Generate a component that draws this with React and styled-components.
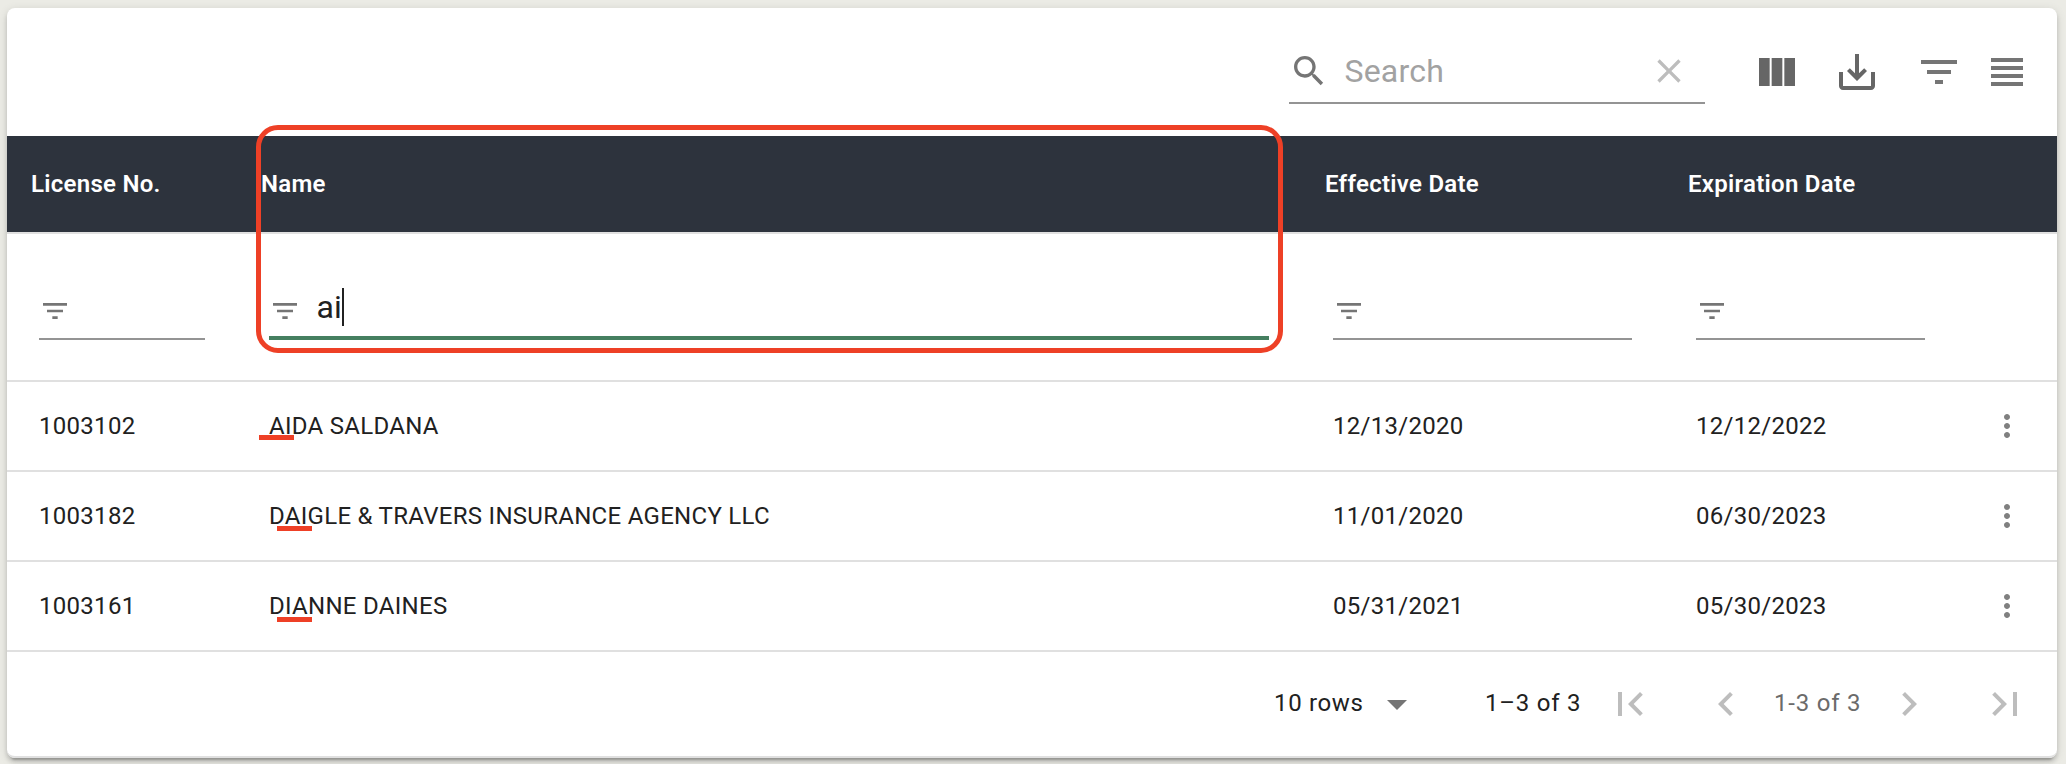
import React from 'react';
import styled, { createGlobalStyle, css } from 'styled-components';

const GlobalStyle = createGlobalStyle`
  *, *::before, *::after { box-sizing: border-box; }
  body {
    margin: 0;
    background: #ebebe5;
    color: #212121;
    font-family: Roboto, "Liberation Sans", sans-serif;
    -webkit-font-smoothing: antialiased;
  }
`;

const Page = styled.main`
  height: 764px;
  padding: 8px 9px 6px 7px;
  overflow: hidden;
`;

const Card = styled.section`
  position: relative;
  display: flex;
  flex-direction: column;
  height: 750px;
  background: #fff;
  border-radius: 8px;
  box-shadow:
    0 6px 2px -4px rgba(0, 0, 0, 0.2),
    0 4px 4px 0 rgba(0, 0, 0, 0.14),
    0 2px 10px 0 rgba(0, 0, 0, 0.12);
`;

const Svg = styled.svg`
  display: block;
  flex: none;
  width: ${(p) => p.$size}px;
  height: ${(p) => p.$size}px;
  fill: ${(p) => p.$color};
`;

const ICONS = {
  search:
    'M15.5 14h-.79l-.28-.27C15.41 12.59 16 11.11 16 9.5 16 5.91 13.09 3 9.5 3S3 5.91 3 9.5 5.91 16 9.5 16c1.61 0 3.09-.59 4.23-1.57l.27.28v.79l5 4.99L20.49 19l-4.99-5zm-6 0C7.01 14 5 11.99 5 9.5S7.01 5 9.5 5 14 7.01 14 9.5 11.99 14 9.5 14z',
  clear:
    'M19 6.41L17.59 5 12 10.59 6.41 5 5 6.41 10.59 12 5 17.59 6.41 19 12 13.41 17.59 19 19 17.59 13.41 12z',
  columns: 'M14.67 5v14H9.33V5h5.34zm1 14H21V5h-5.33v14zm-7.34 0V5H3v14h5.33z',
  download:
    'M19 12v7H5v-7H3v7c0 1.1.9 2 2 2h14c1.1 0 2-.9 2-2v-7h-2zm-6 .67l2.59-2.58L17 11.5l-5 5-5-5 1.41-1.41L11 12.67V3h2z',
  filter: 'M10 18h4v-2h-4v2zM3 6v2h18V6H3zm3 7h12v-2H6v2z',
  density: 'M4 15h16v-2H4v2zm0 4h16v-2H4v2zm0-8h16V9H4v2zm0-6v2h16V5H4z',
  more: 'M12 8c1.1 0 2-.9 2-2s-.9-2-2-2-2 .9-2 2 .9 2 2 2zm0 2c-1.1 0-2 .9-2 2s.9 2 2 2 2-.9 2-2-.9-2-2-2zm0 6c-1.1 0-2 .9-2 2s.9 2 2 2 2-.9 2-2-.9-2-2-2z',
  dropdown: 'M7 10l5 5 5-5z',
  first: 'M18.41 16.59L13.82 12l4.59-4.59L17 6l-6 6 6 6zM6 6h2v12H6z',
  prev: 'M15.41 7.41L14 6l-6 6 6 6 1.41-1.41L10.83 12z',
  next: 'M10 6L8.59 7.41 13.17 12l-4.58 4.59L10 18l6-6z',
  last: 'M5.59 7.41L10.18 12l-4.59 4.59L7 18l6-6-6-6zM16 6h2v12h-2z',
};

const Icon = ({ name, size = 48, color = '#757575' }) => (
  <Svg viewBox="0 0 24 24" $size={size} $color={color} aria-hidden="true">
    <path d={ICONS[name]} />
  </Svg>
);

const Toolbar = styled.header`
  display: flex;
  justify-content: flex-end;
  align-items: flex-start;
  height: 128px;
  padding: 32px 26px 0 0;
`;

const SearchField = styled.label`
  display: flex;
  align-items: center;
  width: 416px;
  height: 64px;
  padding-right: 16px;
  border-bottom: 2px solid #949494;
`;

const SearchText = styled.span`
  flex: 1;
  padding-left: 15.5px;
  font-size: 32px;
  line-height: 38px;
  letter-spacing: 0.2px;
  color: #a2a2a2;
`;

const IconButton = styled.button`
  display: block;
  flex: none;
  margin: 0 0 0 ${(p) => p.$gap || 0}px;
  padding: 0;
  border: 0;
  background: none;
`;

const ToolbarButton = styled(IconButton)`
  margin-top: 8px;
`;

const rowGrid = css`
  display: grid;
  grid-template-columns: 230px 1064px 363px 293px 100px;
  border-bottom: 2px solid #e0e0e0;
`;

const HeadRow = styled.div`
  ${rowGrid}
  align-items: center;
  height: 98px;
  background: #2d333d;
  background-clip: padding-box;
  color: #fff;
`;

const HeadCell = styled.div`
  padding-left: 24px;
  font-size: 24px;
  font-weight: 600;
  line-height: 36px;
  letter-spacing: 0.28px;
`;

const FilterRow = styled.div`
  ${rowGrid}
  height: 148px;
  padding-top: 42px;
`;

const FilterCell = styled.div`
  padding: 0 32px;
`;

const FilterField = styled.div`
  display: flex;
  align-items: flex-start;
  height: 64px;
  padding-top: 12px;
  border-bottom: ${(p) => (p.$focused ? '4px solid #457f60' : '2px solid #949494')};

  svg { margin-top: 7px; }
`;

const FilterValue = styled.span`
  margin-left: 15.5px;
  font-size: 32px;
  line-height: 38px;
  letter-spacing: 0.2px;
`;

const Caret = styled.span`
  width: 2px;
  height: 38px;
  background: #212121;
`;

const BodyRow = styled.div`
  ${rowGrid}
  align-items: center;
  height: 90px;
`;

const Cell = styled.div`
  padding-left: 32px;
  font-size: 24px;
  line-height: 34px;
  letter-spacing: 0.29px;
  white-space: nowrap;
`;

const ActionCell = styled.div`
  padding-left: 32px;
`;

const Mark = styled.span`
  position: relative;

  &::after {
    content: '';
    position: absolute;
    left: ${(p) => p.$left}px;
    top: ${(p) => p.$top}px;
    width: 35px;
    height: 5px;
    background: #ee4026;
  }
`;

const Footer = styled.footer`
  display: flex;
  align-items: center;
  justify-content: flex-end;
  height: 106px;
  padding-right: 28px;
  border-bottom: 2px solid #e0e0e0;
  border-radius: 0 0 8px 8px;
`;

const FooterText = styled.span`
  width: ${(p) => p.$width}px;
  flex: none;
  padding: 0 0 2px ${(p) => p.$indent || 0}px;
  font-size: 24px;
  line-height: 34px;
  letter-spacing: ${(p) => p.$spacing || 0.78}px;
  white-space: nowrap;
  color: ${(p) => p.$color || '#212121'};
`;

const Highlight = styled.div`
  position: absolute;
  left: 249px;
  top: 117px;
  width: 1027px;
  height: 228px;
  border: 5px solid #ee4026;
  border-radius: 22px;
  pointer-events: none;
`;

const columns = [
  { label: 'License No.' },
  { label: 'Name', value: 'ai' },
  { label: 'Effective Date' },
  { label: 'Expiration Date' },
];

const rows = [
  { id: '1003102', name: 'AIDA SALDANA', from: '12/13/2020', to: '12/12/2022', left: -10, top: 23 },
  { id: '1003182', name: 'DAIGLE & TRAVERS INSURANCE AGENCY LLC', from: '11/01/2020', to: '06/30/2023', left: 8, top: 24 },
  { id: '1003161', name: 'DIANNE DAINES', from: '05/31/2021', to: '05/30/2023', left: 8, top: 25 },
];

const faded = '#bdbdbd';

export default function App() {
  return (
    <>
      <GlobalStyle />
      <Page>
        <Card>
          <Toolbar>
            <SearchField>
              <Icon name="search" size={40} />
              <SearchText>Search</SearchText>
              <Icon name="clear" size={40} color={faded} />
            </SearchField>
            <ToolbarButton $gap={48} aria-label="Show columns"><Icon name="columns" color="#666" /></ToolbarButton>
            <ToolbarButton $gap={32} aria-label="Export"><Icon name="download" color="#666" /></ToolbarButton>
            <ToolbarButton $gap={34} aria-label="Filter"><Icon name="filter" /></ToolbarButton>
            <ToolbarButton $gap={20} aria-label="Density"><Icon name="density" /></ToolbarButton>
          </Toolbar>
          <HeadRow>
            {columns.map((c) => <HeadCell key={c.label}>{c.label}</HeadCell>)}
          </HeadRow>
          <FilterRow>
            {columns.map((c) => (
              <FilterCell key={c.label}>
                <FilterField $focused={!!c.value}>
                  <Icon name="filter" size={32} />
                  {c.value && <><FilterValue>{c.value}</FilterValue><Caret /></>}
                </FilterField>
              </FilterCell>
            ))}
          </FilterRow>
          {rows.map((r) => (
            <BodyRow key={r.id}>
              <Cell>{r.id}</Cell>
              <Cell><Mark $left={r.left} $top={r.top}>{r.name}</Mark></Cell>
              <Cell>{r.from}</Cell>
              <Cell>{r.to}</Cell>
              <ActionCell>
                <IconButton aria-label="Row actions"><Icon name="more" size={36} color="#808080" /></IconButton>
              </ActionCell>
            </BodyRow>
          ))}
          <Footer>
            <FooterText $width={99} $spacing={0.65}>10 rows</FooterText>
            <Icon name="dropdown" />
            <FooterText $width={185} $indent={64}>1–3 of 3</FooterText>
            <IconButton aria-label="First page"><Icon name="first" color={faded} /></IconButton>
            <IconButton $gap={48} aria-label="Previous page"><Icon name="prev" color={faded} /></IconButton>
            <FooterText $width={135} $indent={24} $color="#6b6b6b">1-3 of 3</FooterText>
            <IconButton aria-label="Next page"><Icon name="next" color={faded} /></IconButton>
            <IconButton $gap={48} aria-label="Last page"><Icon name="last" color={faded} /></IconButton>
          </Footer>
          <Highlight />
        </Card>
      </Page>
    </>
  );
}
